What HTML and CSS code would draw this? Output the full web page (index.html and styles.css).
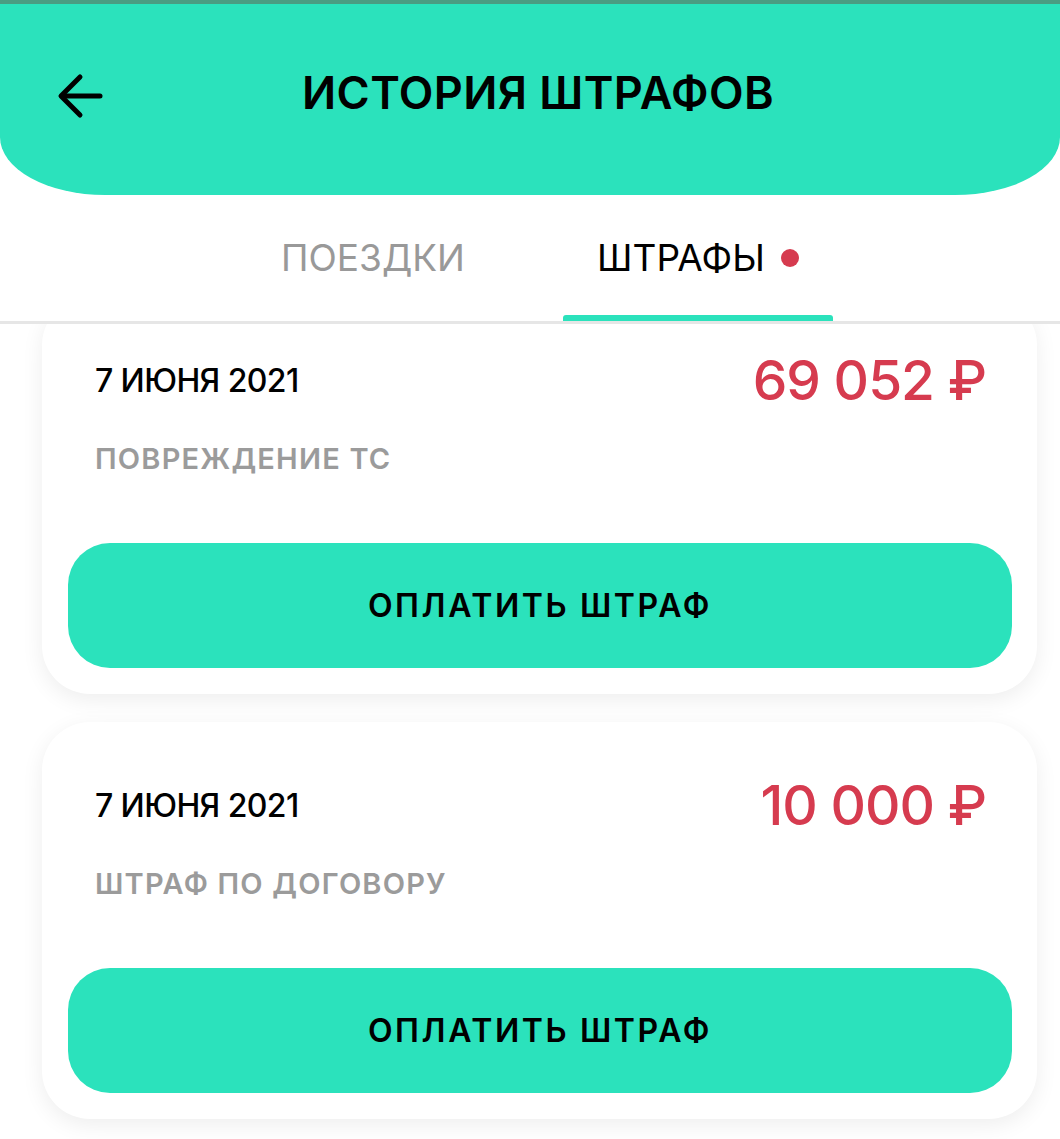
FILE: index.html
```html
<!DOCTYPE html>
<html lang="ru">
<head>
    <meta charset="UTF-8">
    <meta name="viewport" content="width=device-width, initial-scale=1.0">
    <title>История штрафов</title>
    <link rel="stylesheet" href="styles.css">
</head>
<body>

    <div class="status-strip"></div>

    <header class="header">
        <button class="back-btn" aria-label="Назад">
            <svg width="48" height="48" viewBox="0 0 48 48" fill="none" stroke="#000" stroke-width="5" stroke-linecap="round" stroke-linejoin="round">
                <path d="M44 24H6"/>
                <path d="M24 5L5 24L24 43"/>
            </svg>
        </button>
        <h1 class="title">ИСТОРИЯ ШТРАФОВ</h1>
    </header>

    <nav class="tabs">
        <div class="tab">ПОЕЗДКИ</div>
        <div class="tab active">ШТРАФЫ<span class="dot"></span></div>
    </nav>

    <main class="list">
        <div class="cards">
            <div class="card">
                <div class="card-info">
                    <div class="card-row">
                        <span class="date">7 ИЮНЯ 2021</span>
                        <span class="amount">69 052 ₽</span>
                    </div>
                    <div class="reason">ПОВРЕЖДЕНИЕ ТС</div>
                </div>
                <button class="pay-btn">ОПЛАТИТЬ ШТРАФ</button>
            </div>

            <div class="card">
                <div class="card-info">
                    <div class="card-row">
                        <span class="date">7 ИЮНЯ 2021</span>
                        <span class="amount">10 000 ₽</span>
                    </div>
                    <div class="reason">ШТРАФ ПО ДОГОВОРУ</div>
                </div>
                <button class="pay-btn">ОПЛАТИТЬ ШТРАФ</button>
            </div>
        </div>
    </main>

</body>
</html>
```

FILE: styles.css
```css
:root {
    --teal: #2be2bc;
    --red: #d63b4f;
    --gray: #9b9b9b;
    --text: #000;
}

body {
    margin: 0;
    font-family: Inter, "Noto Sans", sans-serif;
    background-color: #fff;
    color: var(--text);
    height: 1139px;
    overflow: hidden;
}

.status-strip {
    height: 4px;
    background-color: #4a9c82;
}

/* header */
.header {
    height: 191px;
    box-sizing: border-box;
    padding: 66px 0 0 56px;
    background-color: var(--teal);
    border-radius: 0 0 105px 105px / 0 0 58px 58px;
    display: grid;
    grid-template-columns: 1fr auto 1fr;
    align-items: start;
    position: relative;
    z-index: 2;
}
.back-btn {
    justify-self: start;
    background: none;
    border: none;
    padding: 0;
    margin-top: 2px;
    width: 48px;
    height: 48px;
    cursor: pointer;
}
.back-btn svg {
    display: block;
}
.title {
    margin: 0 0 0 -40px;
    font-size: 45px;
    line-height: 1;
    font-weight: 600;
    letter-spacing: 0.4px;
}

/* tabs */
.tabs {
    display: flex;
    justify-content: center;
    gap: 55px;
    padding-left: 11px;
    border-bottom: 3px solid #e6e6e6;
    background-color: #fff;
}
.tab {
    width: 270px;
    height: 126px;
    box-sizing: border-box;
    padding-top: 44px;
    display: flex;
    justify-content: center;
    align-items: flex-start;
    gap: 16px;
    font-size: 37px;
    line-height: 1;
    color: #999;
    position: relative;
}
.tab.active {
    color: var(--text);
}
.tab.active::after {
    content: "";
    position: absolute;
    left: 0;
    right: 0;
    bottom: 0;
    height: 6px;
    border-radius: 3px 3px 0 0;
    background-color: var(--teal);
}
.dot {
    width: 18px;
    height: 18px;
    border-radius: 50%;
    background-color: var(--red);
    margin-top: 10px;
}

/* cards */
.list {
    overflow: hidden;
    padding-bottom: 40px;
}
.cards {
    margin-top: -27px;
    padding: 0 23px 0 42px;
    display: flex;
    flex-direction: column;
    gap: 28px;
}
.card {
    background-color: #fff;
    border-radius: 48px;
    padding: 26px 25px 26px 26px;
    box-shadow: 0 6px 22px rgba(0, 0, 0, 0.07);
}
.card-info {
    padding: 28px 26px 0 27px;
}
.card-row {
    height: 59px;
    display: flex;
    justify-content: space-between;
    align-items: center;
}
.date {
    font-size: 32px;
    line-height: 1;
    font-weight: 500;
    letter-spacing: -0.6px;
}
.amount {
    font-size: 55px;
    line-height: 1;
    font-weight: 500;
    letter-spacing: -1px;
    color: var(--red);
}
.reason {
    margin-top: 34px;
    font-size: 29px;
    line-height: 1;
    font-weight: 600;
    letter-spacing: 1.2px;
    color: var(--gray);
}
.pay-btn {
    display: block;
    width: 100%;
    height: 125px;
    margin-top: 70px;
    border: none;
    border-radius: 42px;
    background-color: var(--teal);
    font-family: inherit;
    font-size: 32px;
    font-weight: 600;
    letter-spacing: 2.6px;
    color: var(--text);
    cursor: pointer;
}
```
